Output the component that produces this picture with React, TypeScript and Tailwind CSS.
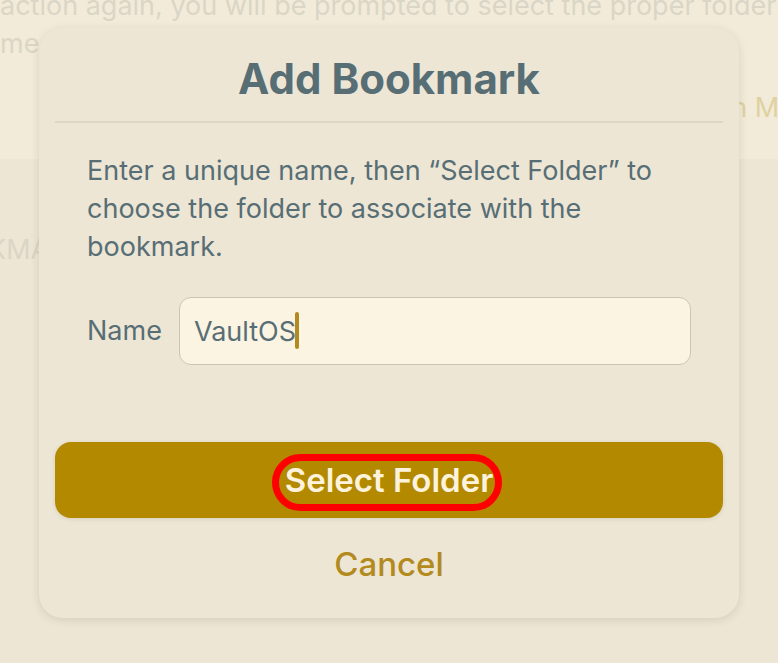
import { useState } from "react";

const SettingsPage = () => {
  return (
    <div className="text-[27px] leading-[38px] whitespace-nowrap" aria-hidden="true">
      <section className="flow-root h-[159px] bg-[#f2ebd9] text-[#dad6c7]">
        <p className="-mt-[13px]">action again, you will be prompted to select the proper folder</p>
        <p>me</p>
        <p className="mt-[26px] ml-[94%] text-[#dfd29f]">n M</p>
      </section>
      <h2 className="mt-[72px] -ml-3 text-[#dad5c7]">KMA</h2>
    </div>
  );
};

const AddBookmarkDialog = () => {
  const [name, setName] = useState("VaultOS");

  return (
    <form
      role="dialog"
      aria-labelledby="dialog-title"
      className="w-full rounded-3xl bg-[#ede6d5] px-4 pb-4 shadow-[0_2px_8px_rgba(90,80,50,0.16)]"
      onSubmit={(e) => e.preventDefault()}
    >
      <h1
        id="dialog-title"
        className="border-b-2 border-[#dcd6c5] pt-5 pb-[11px] text-center text-[42px] leading-[62px] font-bold"
      >
        Add Bookmark
      </h1>
      <div className="px-8 pt-[29px]">
        <p className="text-[27px] leading-[38px]">
          Enter a unique name, then “Select Folder” to choose the folder to associate with the bookmark.
        </p>
        <div className="mt-[31px] flex items-center gap-[17px]">
          <label htmlFor="name" className="text-[27px] leading-[38px]">
            Name
          </label>
          <div className="relative min-w-0 flex-1">
            <input
              id="name"
              type="text"
              value={name}
              onChange={(e) => setName(e.target.value)}
              className="h-[68px] w-full rounded-xl border border-[#cdc5b2] bg-[#fcf4e2] px-[14px] text-[27px] caret-[#b48a1c] outline-none"
            />
            {/* Text cursor */}
            <span className="absolute top-[15px] left-[116px] h-[37px] w-1 rounded-full bg-[#b28a20]" />
          </div>
        </div>
      </div>
      <div className="relative mt-[77px]">
        <button
          type="submit"
          className="h-[76px] w-full rounded-2xl bg-[#b38900] pt-px text-[33px] font-semibold text-[#fdf3dc] shadow-[0_1px_4px_rgba(90,80,50,0.14)]"
        >
          Select Folder
        </button>
        {/* Highlight ring */}
        <span className="pointer-events-none absolute inset-x-0 top-3 right-1 mx-auto h-[57px] w-[230px] rounded-full border-7 border-[#ff0000]" />
      </div>
      <button type="button" className="mt-2 h-[76px] w-full pt-px text-[33px] font-medium text-[#b28a1e]">
        Cancel
      </button>
    </form>
  );
};

export default function App() {
  return (
    <main className="relative min-h-screen overflow-hidden bg-[#ede6d4] font-['Inter','Liberation_Sans',sans-serif] text-[#586e75]">
      <SettingsPage />
      <div className="absolute inset-0 flex items-start justify-center px-[39px] pt-7">
        <AddBookmarkDialog />
      </div>
    </main>
  );
}
